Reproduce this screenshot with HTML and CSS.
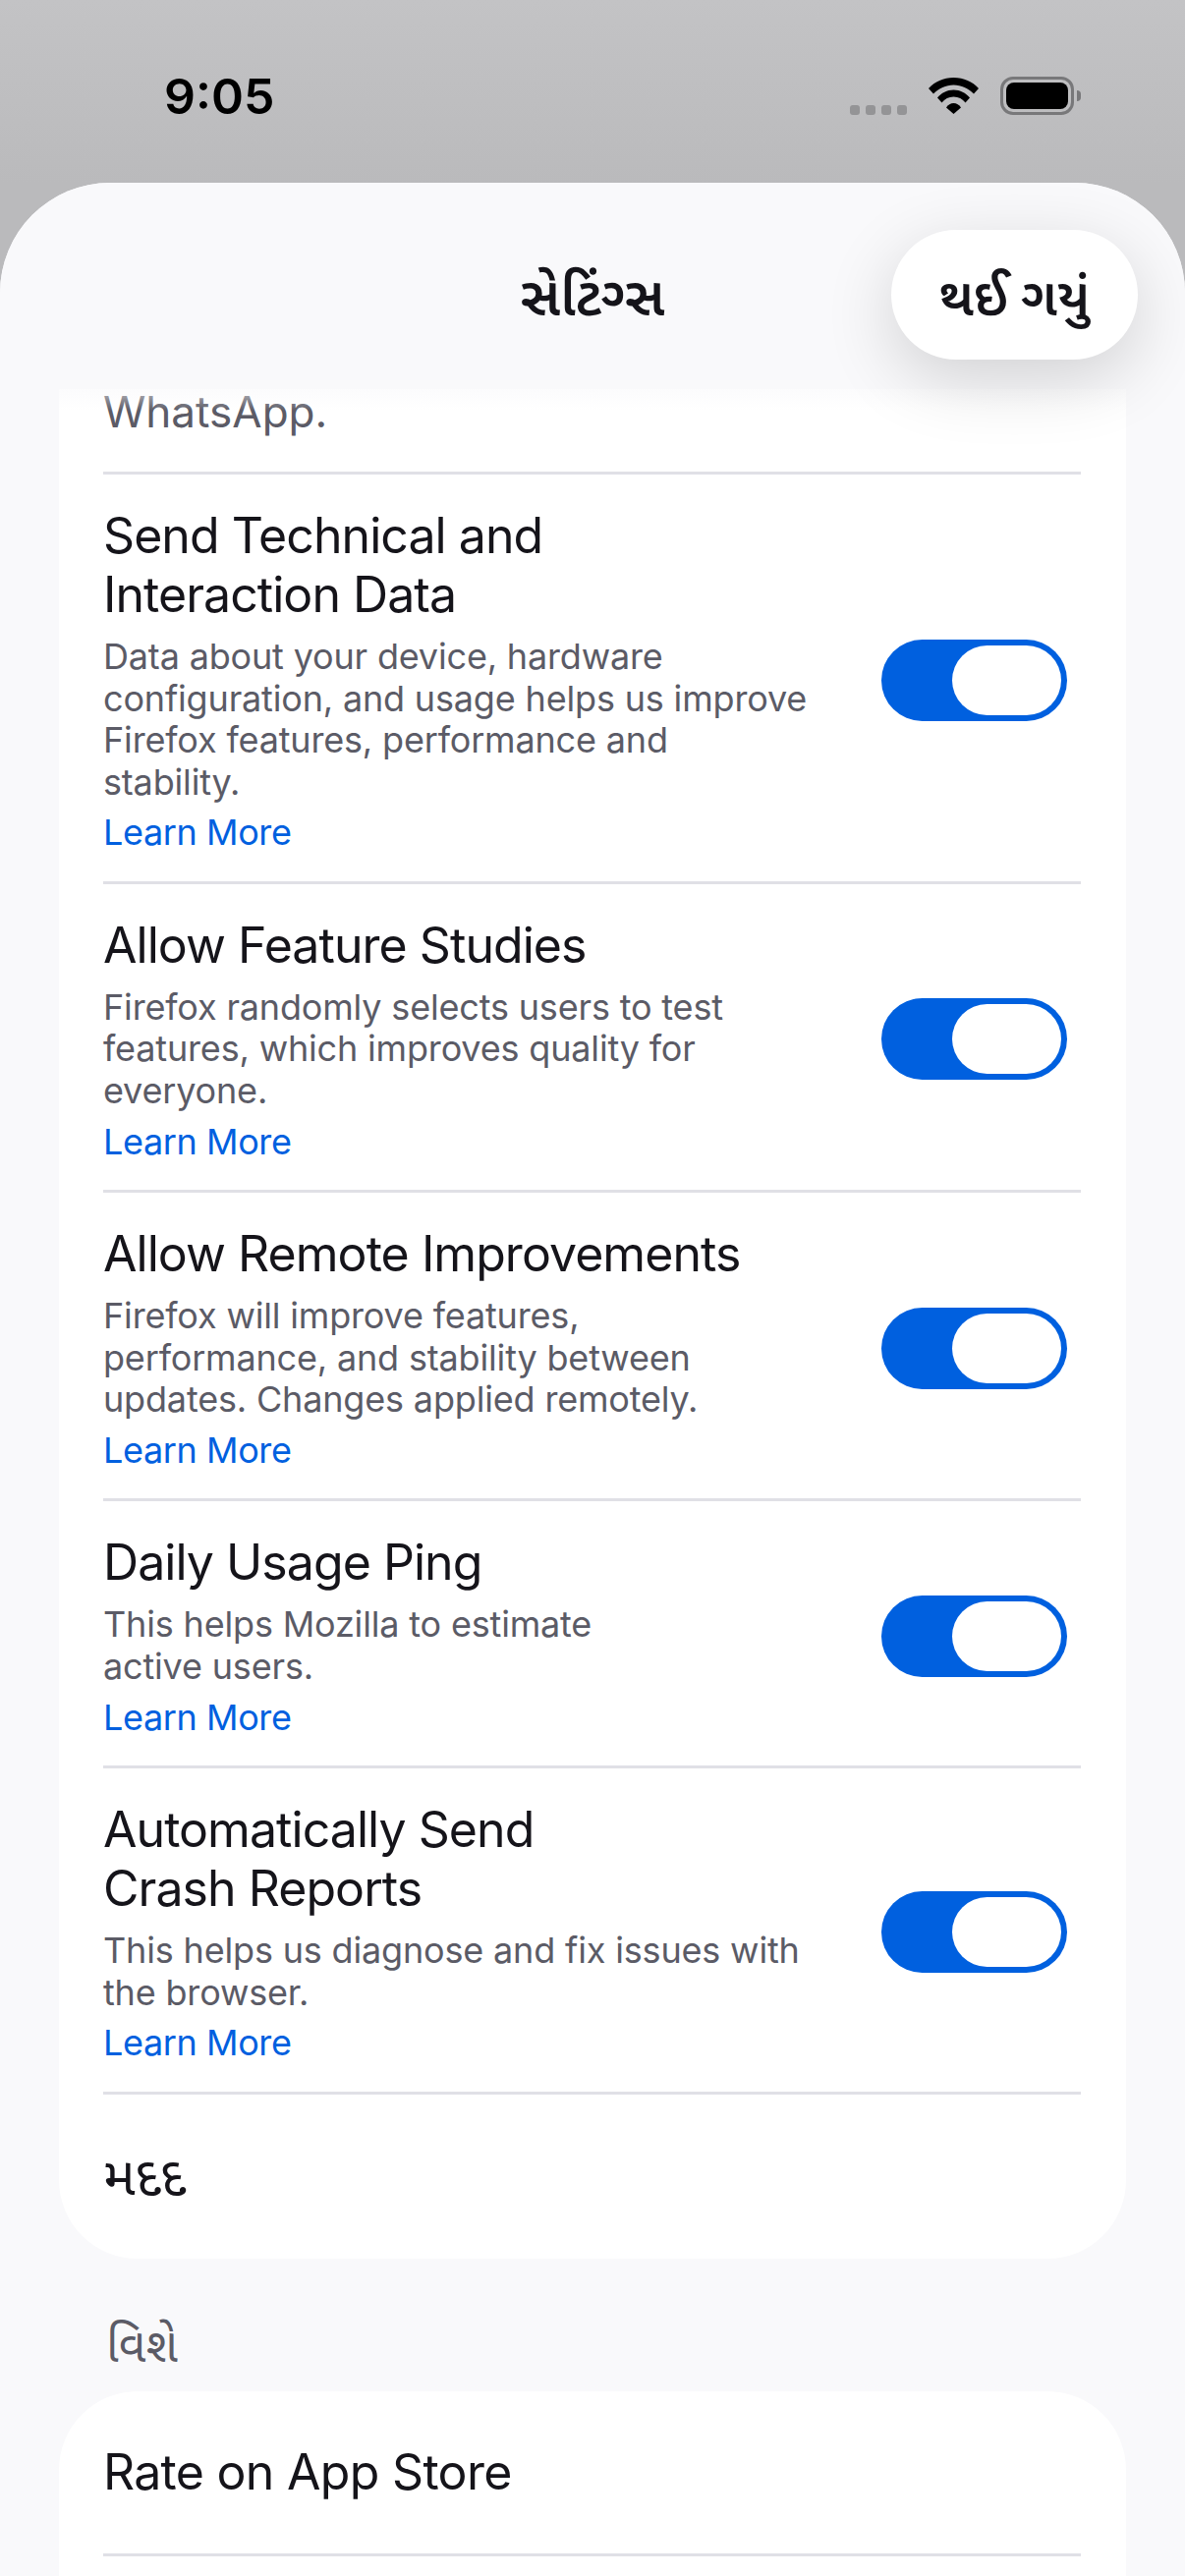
FILE: index.html
```html
<!DOCTYPE html>
<html lang="gu">
<head>
    <meta charset="UTF-8">
    <meta name="viewport" content="width=device-width, initial-scale=1.0">
    <title>Settings</title>
    <link rel="stylesheet" href="styles.css">
</head>
<body>
    <div class="status-bar">
        <span class="clock">9:05</span>
        <div class="status-icons">
            <div class="signal"><i></i><i></i><i></i><i></i></div>
            <svg class="wifi" width="51" height="37" viewBox="0 0 51 37">
                <path d="M0 11C6.500 4 15 0 25.500 0S44.500 4 51 11l-5 5.500C40.500 11 33.500 7.500 25.500 7.500S10.500 11 5 16.500z"/>
                <path d="M9 20.500C13 15.500 19 12.500 25.500 12.500S38 15.500 42 20.500L37.500 25.500C34.500 21.500 30.500 19.500 25.500 19.500S16.500 21.500 13.500 25.500z"/>
                <path d="M18 30.500C19.800 27.500 22.500 26 25.500 26S31.200 27.500 33 30.500L25.500 37z"/>
            </svg>
            <div class="battery"><div class="battery-fill"></div></div>
            <div class="battery-cap"></div>
        </div>
    </div>

    <div class="sheet">
        <div class="nav">
            <h1 class="nav-title">સેટિંગ્સ</h1>
            <button class="done-button">થઈ ગયું</button>
        </div>

        <div class="content">
            <div class="card card-first">
                <div class="row-tail">WhatsApp.</div>

                <div class="row">
                    <div class="row-text">
                        <div class="row-title">Send Technical and<br>Interaction Data</div>
                        <div class="row-desc">Data about your device, hardware<br>configuration, and usage helps us improve<br>Firefox features, performance and<br>stability.</div>
                        <a class="learn-more">Learn More</a>
                    </div>
                    <div class="toggle"><div class="knob"></div></div>
                </div>

                <div class="row">
                    <div class="row-text">
                        <div class="row-title">Allow Feature Studies</div>
                        <div class="row-desc">Firefox randomly selects users to test<br>features, which improves quality for<br>everyone.</div>
                        <a class="learn-more">Learn More</a>
                    </div>
                    <div class="toggle"><div class="knob"></div></div>
                </div>

                <div class="row">
                    <div class="row-text">
                        <div class="row-title">Allow Remote Improvements</div>
                        <div class="row-desc">Firefox will improve features,<br>performance, and stability between<br>updates. Changes applied remotely.</div>
                        <a class="learn-more">Learn More</a>
                    </div>
                    <div class="toggle"><div class="knob"></div></div>
                </div>

                <div class="row">
                    <div class="row-text">
                        <div class="row-title">Daily Usage Ping</div>
                        <div class="row-desc">This helps Mozilla to estimate<br>active users.</div>
                        <a class="learn-more">Learn More</a>
                    </div>
                    <div class="toggle"><div class="knob"></div></div>
                </div>

                <div class="row">
                    <div class="row-text">
                        <div class="row-title">Automatically Send<br>Crash Reports</div>
                        <div class="row-desc">This helps us diagnose and fix issues with<br>the browser.</div>
                        <a class="learn-more">Learn More</a>
                    </div>
                    <div class="toggle"><div class="knob"></div></div>
                </div>

                <div class="row-plain row-help">મદદ</div>
            </div>

            <div class="section-label">વિશે</div>

            <div class="card card-about">
                <div class="row-plain row-rate">Rate on App Store</div>
            </div>
        </div>
    </div>
</body>
</html>
```

FILE: styles.css
```css
* {
    margin: 0;
    padding: 0;
    box-sizing: border-box;
}
html, body {
    height: 2622px;
    overflow: hidden;
}
body {
    font-family: Inter, "Noto Sans Gujarati", "Noto Sans", sans-serif;
    background: linear-gradient(#c3c3c5, #bababc 186px);
    color: #15141a;
}
.status-bar {
    height: 186px;
    padding: 72px 106px 0 167px;
    display: flex;
    justify-content: space-between;
    align-items: flex-start;
}
.clock {
    font-size: 50px;
    line-height: 52px;
    font-weight: 600;
    color: #000;
}
.status-icons {
    display: flex;
    align-items: center;
    margin-top: 6px;
}
.signal {
    display: flex;
    gap: 6px;
    margin: 28px 22px 0 0;
}
.signal i {
    width: 10px;
    height: 10px;
    border-radius: 3px;
    background: #949496;
}
.wifi {
    margin-right: 22px;
    fill: #000;
}
.battery {
    width: 75px;
    height: 39px;
    padding: 3px;
    border: 3px solid #78787a;
    border-radius: 13px;
}
.battery-fill {
    height: 100%;
    background: #000;
    border-radius: 8px;
}
.battery-cap {
    width: 4px;
    height: 11px;
    margin-left: 3px;
    background: #78787a;
    border-radius: 0 4px 4px 0;
}
.sheet {
    height: 2436px;
    background: #f9f9fb;
    border-radius: 112px 112px 0 0;
    overflow: hidden;
}
.nav {
    height: 210px;
    padding: 48px 48px 0 0;
    display: flex;
    justify-content: flex-end;
    align-items: flex-start;
    position: relative;
    background: #f9f9fb;
}
/* scroll edge fade over the top of the list */
.nav::after {
    content: "";
    position: absolute;
    top: 100%;
    left: 0;
    right: 0;
    height: 22px;
    background: linear-gradient(rgba(249,249,251,0.6), rgba(249,249,251,0));
}
.nav-title {
    position: absolute;
    left: 0;
    right: 0;
    top: 85px;
    text-align: center;
    font-size: 55px;
    line-height: 60px;
    font-weight: 600;
}
.done-button {
    position: relative;
    z-index: 2;
    width: 251px;
    height: 132px;
    border: none;
    border-radius: 66px;
    background: #fff;
    color: #15141a;
    font-family: inherit;
    font-size: 53px;
    line-height: 60px;
    font-weight: 600;
    padding-top: 4px;
    box-shadow: 0 20px 70px rgba(0,0,0,0.16);
}
.content {
    padding: 0 60px;
}
.card {
    background: #fff;
    padding: 0 46px 0 45px;
}
.card-first {
    border-radius: 0 0 80px 80px;
}
.card-about {
    border-radius: 80px 80px 0 0;
    padding-bottom: 100px;
}
.row-tail {
    height: 87px;
    font-size: 44px;
    line-height: 46px;
    color: #5b5b66;
    border-bottom: 3px solid #e0e0e6;
}
.row {
    display: flex;
    justify-content: space-between;
    align-items: center;
    padding: 32px 14px 27.500px 0;
    border-bottom: 3px solid #e0e0e6;
}
.row-title {
    font-size: 50px;
    line-height: 60px;
    letter-spacing: -0.95px;
}
.row-desc {
    font-size: 36px;
    line-height: 42.600px;
    letter-spacing: -0.17px;
    color: #5b5b66;
    margin-top: 12px;
}
.learn-more {
    display: block;
    font-size: 36px;
    line-height: 43px;
    letter-spacing: -0.4px;
    margin-top: 9px;
    color: #0060df;
}
.toggle {
    width: 189px;
    height: 83px;
    padding: 6px;
    background: #0060df;
    border-radius: 42px;
    display: flex;
    justify-content: flex-end;
    flex-shrink: 0;
}
.knob {
    width: 111px;
    height: 71px;
    background: #fff;
    border-radius: 36px;
}
.row-plain {
    display: flex;
    align-items: center;
    font-size: 50px;
    letter-spacing: -0.7px;
}
.row-help {
    height: 167px;
    padding-top: 7px;
    font-size: 55px;
    letter-spacing: 0;
}
.row-rate {
    height: 168px;
    border-bottom: 3px solid #e0e0e6;
}
.section-label {
    height: 135px;
    padding: 58px 0 0 48px;
    font-size: 48px;
    line-height: 60px;
    color: #5b5b66;
}
```
